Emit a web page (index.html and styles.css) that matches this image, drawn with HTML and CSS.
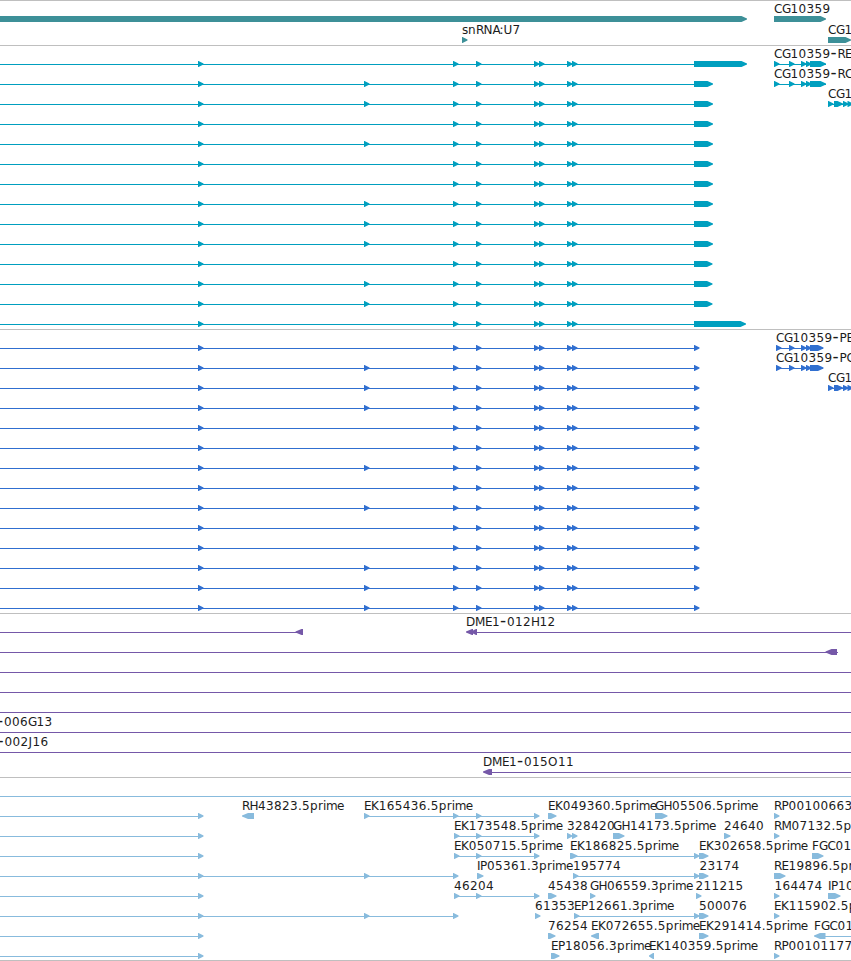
FILE: index.html
```html
<!DOCTYPE html>
<html lang="en">
<head>
<meta charset="utf-8">
<title>Genome tracks</title>
<link rel="stylesheet" href="styles.css">
</head>
<body>
<main class="browser">
  <section class="track genes" id="genes"></section>
  <section class="track transcripts" id="transcripts"></section>
  <section class="track proteins" id="proteins"></section>
  <section class="track clones" id="clones"></section>
  <section class="track ests" id="ests"></section>
</main>
<script src="tracks.js"></script>
</body>
</html>
```
FILE: styles.css
```css
body {
  margin: 0;
  background: #fff;
  overflow: hidden;
}

.browser {
  display: flex;
  flex-direction: column;
  width: 851px;
  border-bottom: 1px solid #bfbfbf;
}

.track {
  box-sizing: border-box;
  display: flex;
  flex-direction: column;
  border-top: 1px solid #bfbfbf;
  padding-top: 4px;
  overflow: hidden;
}

.row {
  display: block;
  flex: none;
  width: 851px;
  height: 20px;
  overflow: visible;
  fill: currentColor;
}

.row text {
  fill: #1c1c1c;
  font: 12px "DejaVu Sans", sans-serif;
}

.row .dash {
  font-size: 17px;
}

.genes { height: 45px; color: #3d9098; }
.genes .row { height: 21px; }
.transcripts { height: 284px; color: #009fbf; }
.proteins { height: 284px; color: #306fd0; }
.clones { height: 164px; color: #7558a8; }
.ests { height: 183px; color: #88bbdd; }
```
FILE: tracks.js
```js
// Each row is a list of items:
//   ['l', x1, x2]        connecting line
//   ['r', x1, x2]        block pointing right
//   ['f', x1, x2]        block pointing left
//   ['t', x, string]     label
const MID = 14;
const NS = 'http://www.w3.org/2000/svg';
const ADVANCE = {
  '.': 4, '-': 7, ':': 4, p: 8, r: 5, i: 3, m: 11, e: 8, s: 6, n: 8,
  A: 7, C: 8, D: 9, E: 7, F: 7, G: 8.5, H: 8.5, I: 3, J: 4, K: 7.7,
  M: 10, N: 9, O: 10, P: 7, R: 7.5, U: 9
};

function node(parent, name, attrs) {
  const el = document.createElementNS(NS, name);
  for (const key in attrs) el.setAttribute(key, attrs[key]);
  parent.appendChild(el);
  return el;
}

function drawLabel(svg, start, label) {
  let x = start;
  const xs = [];
  for (const ch of label) {
    xs.push(x);
    x += ADVANCE[ch] || 8;
  }
  const text = node(svg, 'text', { x: xs.join(' '), y: MID - 6 });
  for (const part of label.split(/(-)/)) {
    if (part === '-') node(text, 'tspan', { class: 'dash' }).textContent = part;
    else if (part) text.appendChild(document.createTextNode(part));
  }
}

function drawRow(track, items) {
  const svg = node(track, 'svg', { class: 'row' });
  for (const [kind, a, b] of items) {
    if (kind === 'l') {
      node(svg, 'rect', { x: a, y: MID, width: b - a, height: 1 });
    } else if (kind === 'r') {
      const neck = Math.max(a, b - 6);
      node(svg, 'polygon', {
        points: `${a},${MID - 3} ${neck + 0.5},${MID - 3} ${b},${MID - 0.6} ${b},${MID + 0.4} ${neck + 0.5},${MID + 3} ${a},${MID + 3}`
      });
    } else if (kind === 'f') {
      const neck = Math.min(b, a + 7);
      node(svg, 'polygon', {
        points: `${b},${MID - 3} ${neck - 1},${MID - 3} ${a},${MID - 0.5} ${a},${MID + 0.5} ${neck - 1},${MID + 3} ${b},${MID + 3}`
      });
    } else {
      drawLabel(svg, a, b);
    }
  }
}

function draw(id, rows) {
  const track = document.getElementById(id);
  rows.forEach(items => drawRow(track, items));
}

const ticks = (...xs) => xs.map(x => ['r', x, x + 5.5]);
const EXONS = [198, 453, 476, 534, 539, 567, 572];

draw('genes', [
  [['r', 0, 747], ['t', 774, 'CG10359'], ['r', 774, 826]],
  [['t', 462, 'snRNA:U7'], ...ticks(462), ['t', 828, 'CG1'], ['r', 828, 851]]
]);

const nextGene = [['t', 828, 'CG1'], ['l', 828, 851], ...ticks(828), ['r', 834, 843], ...ticks(843, 847.5)];

const transcripts = [747, 713, 713, 713, 713, 713, 713, 713, 713, 713, 712.5, 712.5, 712.5, 746];
const longForms = [1, 2, 4, 7, 8, 9, 11, 12];
draw('transcripts', transcripts.map((end, i) => {
  const row = [['l', 0, 694], ...ticks(...EXONS), ['r', 694, end]];
  if (longForms.includes(i)) row.push(...ticks(364));
  if (i < 2) {
    row.push(['t', 774, i ? 'CG10359-RC' : 'CG10359-RE'], ['l', 774, 826],
      ...ticks(774, 789, 801, 806), ['r', 810, 826]);
  }
  if (i === 2) row.push(...nextGene);
  return row;
}));

const codingLong = [1, 2, 3, 6, 8, 11, 12, 13];
draw('proteins', Array.from({ length: 14 }, (_, i) => {
  const row = [['l', 0, 698], ...ticks(...EXONS, 694)];
  if (codingLong.includes(i)) row.push(...ticks(364));
  if (i < 2) {
    row.push(['t', 776, i ? 'CG10359-PC' : 'CG10359-PE'], ['l', 776, 823],
      ...ticks(776, 789, 801, 806), ['r', 810, 823.5]);
  }
  if (i === 2) row.push(...nextGene);
  return row;
}));

draw('clones', [
  [['l', 0, 300], ['f', 295.5, 303], ['t', 466, 'DME1-012H12'], ['f', 466, 473], ['f', 471, 477], ['l', 472, 851]],
  [['l', 0, 838], ['f', 825.5, 837]],
  [['l', 0, 851]],
  [['l', 0, 851]],
  [['l', 0, 851]],
  [['t', -3, '-006G13'], ['l', 0, 851]],
  [['t', -2.5, '-002J16'], ['l', 0, 851]],
  [['t', 483, 'DME1-015O11'], ['f', 483, 492], ['l', 486, 851]]
]);

const head = [['l', 0, 202], ...ticks(198)];
const headLong = [['l', 0, 457], ...ticks(198, 364, 453)];
const spliced = [['l', 454, 538], ...ticks(454, 476, 534)];
const tail = [['l', 574, 698], ...ticks(694), ['r', 699, 708.5]];

draw('ests', [
  [['l', 0, 851]],
  [...head, ['t', 242, 'RH43823.5prime'], ['f', 242, 254],
    ['t', 364, 'EK165436.5prime'], ['l', 364, 538], ...ticks(364, 453, 476, 534),
    ['t', 548, 'EK049360.5prime'], ['r', 548, 556.5],
    ['t', 655, 'GH05506.5prime'], ['r', 655, 667.5],
    ['t', 774, 'RP00100663'], ...ticks(774)],
  [...head, ...spliced, ['t', 454, 'EK173548.5prime'],
    ['t', 567, '328420'], ...ticks(567, 572),
    ['t', 613, 'GH14173.5prime'], ['r', 613, 624.5],
    ['t', 724, '24640'], ['r', 724, 730.5],
    ['t', 774, 'RM07132.5pr'], ...ticks(774)],
  [...head, ...spliced, ['t', 454, 'EK050715.5prime'],
    ['t', 570, 'EK186825.5prime'], ['r', 570, 577.5], ...tail,
    ['t', 699, 'EK302658.5prime'],
    ['t', 812, 'FGC01'], ['r', 812, 823.5]],
  [...headLong, ['t', 477, 'IP05361.3prime'], ['r', 477, 483.5],
    ['t', 573, '195774'], ...ticks(573), ...tail,
    ['t', 699.5, '23174'],
    ['t', 774, 'RE19896.5pri'], ['r', 774, 785.5]],
  [...head, ...spliced, ['t', 454, '46204'],
    ['t', 548, '45438'], ['r', 548, 556.5],
    ['t', 590, 'GH06559.3prime'], ...ticks(590),
    ['t', 695.5, '211215'], ...ticks(696),
    ['t', 774.5, '164474'], ...ticks(774),
    ['t', 828, 'IP10'], ['r', 828, 840.5]],
  [...headLong, ['t', 535, '61353'], ...ticks(535),
    ['t', 574, 'EP12661.3prime'], ...ticks(574), ...tail,
    ['t', 699, '500076'],
    ['t', 774, 'EK115902.5p'], ...ticks(774)],
  [...head, ['t', 548, '76254'], ['r', 548, 555.5],
    ['t', 591, 'EK072655.5prime'], ['f', 591, 599],
    ['t', 699, 'EK291414.5prime'], ['r', 699, 708.5],
    ['t', 814, 'FGC01'], ['f', 814, 825.5], ['l', 818, 851]],
  [...head, ['t', 551, 'EP18056.3prime'], ['r', 551, 559.5],
    ['t', 649, 'EK140359.5prime'], ['f', 649, 654],
    ['t', 774, 'RP00101177'], ...ticks(774)]
]);
```
